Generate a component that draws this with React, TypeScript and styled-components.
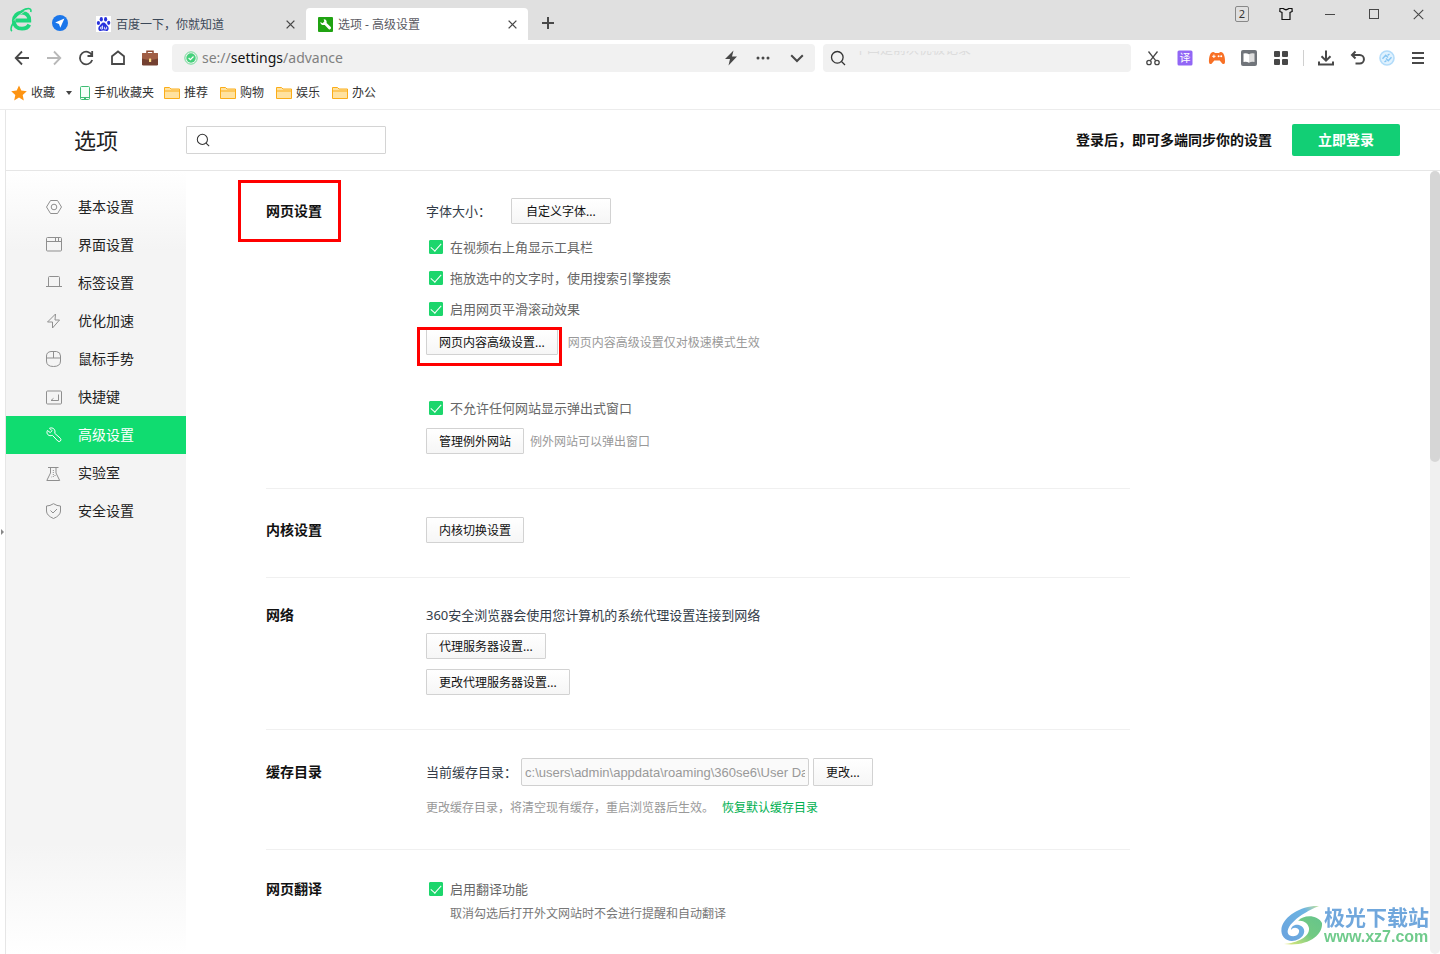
import React from "react";
import styled, { createGlobalStyle } from "styled-components";

const GlobalStyle = createGlobalStyle`
  * { box-sizing: border-box; }
  body {
    margin: 0;
    background: #fff;
    color: #333;
    font: 13px/20px "Noto Sans", "Noto Sans CJK SC", sans-serif;
  }
  button, input { font-family: inherit; margin: 0; }
  a { color: inherit; text-decoration: none; }
  svg { display: block; flex: none; }
`;

/* ---------- window frame ---------- */

const Page = styled.div`
  min-height: 100vh;
  display: flex;
  flex-direction: column;
`;

const TitleBar = styled.header`
  height: 40px;
  display: flex;
  align-items: flex-end;
  background: #e0e0e0;
  padding-left: 10px;
`;

const LogoCell = styled.div`
  height: 33px;
  width: 38px;
`;

const PinCell = styled.div`
  height: 25px;
  width: 38px;
  padding-left: 4px;
`;

const Tab = styled.div<{ $active?: boolean }>`
  display: flex;
  align-items: center;
  gap: 5px;
  width: ${(p) => (p.$active ? 222 : 220)}px;
  height: 32px;
  padding: 0 10px 0 ${(p) => (p.$active ? 12 : 10)}px;
  border-radius: 4px 4px 0 0;
  background: ${(p) => (p.$active ? "#fff" : "transparent")};
  color: ${(p) => (p.$active ? "#5a5a62" : "#3c4858")};
  font-size: 12px;
`;

const TabTitle = styled.span`
  flex: 1;
  padding-top: 2px;
  white-space: nowrap;
`;

const IconButton = styled.button<{ $w?: number; $h?: number }>`
  display: flex;
  align-items: center;
  justify-content: center;
  width: ${(p) => p.$w ?? 32}px;
  height: ${(p) => p.$h ?? 28}px;
  padding: 0;
  border: 0;
  background: none;
  color: #484848;
  flex: none;
`;

const WindowControls = styled.div`
  display: flex;
  align-self: flex-start;
  margin-left: auto;
`;

const TabCount = styled.span`
  width: 14px;
  height: 16px;
  border: 1px solid #888;
  border-radius: 2px;
  font-size: 11px;
  line-height: 14px;
  color: #333;
`;

const ToolBar = styled.div`
  height: 36px;
  display: flex;
  align-items: center;
  padding: 0 4px 0 6px;
`;

const AddressBar = styled.div`
  flex: 631 1 0;
  height: 28px;
  margin-left: 6px;
  padding-left: 12px;
  display: flex;
  align-items: center;
  background: #f1f1f1;
  border-radius: 4px;
`;

const Address = styled.span`
  flex: 1;
  margin-left: 4px;
  color: #808080;
  font-size: 14px;
  b { color: #111; font-weight: 400; }
`;

const SearchBar = styled.label`
  flex: 294 1 0;
  height: 28px;
  margin: 0 6px 0 8px;
  padding: 0 7px;
  display: flex;
  align-items: center;
  gap: 8px;
  background: #f1f1f1;
  border-radius: 4px;
`;

const SearchField = styled.input`
  flex: none;
  width: 0;
  padding: 0;
  border: 0;
  background: none;
  outline: none;
`;

const Ghost = styled.span`
  flex: 1;
  height: 5px;
  margin-bottom: 10px;
  overflow: hidden;
  display: flex;
  align-items: flex-end;
  color: #dcdcdc;
  font-size: 13px;
  line-height: 16px;
`;

const Separator = styled.i`
  width: 1px;
  height: 16px;
  margin: 0 6px;
  background: #d0d0d0;
`;

const Bookmarks = styled.nav`
  height: 34px;
  display: flex;
  align-items: center;
  gap: 12px;
  padding: 1px 0 0 11px;
  border-bottom: 1px solid #ececec;
  font-size: 12px;
  color: #333;
`;

const Bookmark = styled.a`
  display: flex;
  align-items: center;
  gap: 4px;
`;

const PhoneBookmark = styled(Bookmark)`
  margin: 0 -2px 0 -4px;
`;

const Caret = styled.i`
  margin-left: 7px;
  border: 3px solid transparent;
  border-top: 4px solid #444;
  border-bottom: 0;
`;

/* ---------- settings page ---------- */

const Body = styled.div`
  flex: 1;
  display: flex;
`;

const Edge = styled.div`
  width: 6px;
  display: flex;
  align-items: center;
  border-right: 1px solid #e6e6e6;
`;

const EdgeArrow = styled.i`
  margin-left: 1px;
  border: 3px solid transparent;
  border-left-color: #888;
  border-right: 0;
`;

const Settings = styled.div`
  flex: 1;
  min-width: 0;
  display: flex;
  flex-direction: column;
`;

const SettingsHeader = styled.div`
  height: 61px;
  display: flex;
  align-items: center;
  padding-right: 40px;
  border-bottom: 1px solid #e6e6e6;
`;

const Title = styled.h1`
  width: 180px;
  margin: 0;
  text-align: center;
  font-size: 22px;
  line-height: 28px;
  font-weight: 400;
  color: #222;
`;

const SettingsSearch = styled.label`
  width: 200px;
  height: 28px;
  display: flex;
  align-items: center;
  padding: 0 9px;
  border: 1px solid #d4d4d4;
  border-radius: 1px;
  input {
    flex: 1;
    min-width: 0;
    border: 0;
    outline: none;
    background: none;
  }
`;

const SyncNote = styled.strong`
  margin-left: auto;
  font-size: 14px;
  color: #111;
`;

const LoginButton = styled.button`
  width: 108px;
  height: 32px;
  margin-left: 20px;
  padding: 0 0 2px;
  border: 0;
  border-radius: 2px;
  background: #12cf75;
  color: #fff;
  font-size: 14px;
  font-weight: 700;
`;

const Columns = styled.div`
  flex: 1;
  display: flex;
`;

const Sidebar = styled.nav`
  width: 180px;
  padding-top: 17px;
  background: linear-gradient(#fff 0, #f4f4f4 80px, #f4f4f4 calc(100% - 110px), #fff 100%);
`;

const SideItem = styled.a<{ $active?: boolean }>`
  display: flex;
  align-items: center;
  gap: 16px;
  height: 38px;
  padding-left: 40px;
  font-size: 14px;
  color: ${(p) => (p.$active ? "#fff" : "#222")};
  background: ${(p) => (p.$active ? "#10dc70" : "transparent")};
  svg { color: ${(p) => (p.$active ? "#fff" : "#8f8f8f")}; }
`;

const Main = styled.main`
  flex: 1;
  padding-left: 80px;
`;

const SectionBox = styled.section`
  max-width: 864px;
  display: grid;
  grid-template-columns: 160px 1fr;
  padding: 28px 0 34px;
  border-bottom: 1px solid #f0f0f0;
  &:first-child { padding-top: 27px; }
  &:last-child { border-bottom: 0; padding-bottom: 0; }
`;

const SectionTitle = styled.h2<{ $h: number }>`
  position: relative;
  place-self: start;
  margin: 0;
  font-size: 14px;
  line-height: ${(p) => p.$h}px;
  font-weight: 700;
  color: #111;
`;

const TitleMark = styled.i`
  position: absolute;
  inset: -18px -19px -18px -28px;
  border: 3px solid #f00;
`;

const Row = styled.div<{ $h: number; $mt?: number; $gap?: number }>`
  display: flex;
  align-items: center;
  gap: ${(p) => p.$gap ?? 0}px;
  height: ${(p) => p.$h}px;
  margin-top: ${(p) => p.$mt ?? 0}px;
  white-space: nowrap;
`;

const Button = styled.button<{ $wide?: boolean; $tall?: boolean }>`
  height: ${(p) => (p.$tall ? 28 : 26)}px;
  padding: 2px ${(p) => (p.$wide ? 14 : 12)}px 0;
  border: 1px solid #d2d2d2;
  border-radius: 1px;
  background: linear-gradient(#fff, #f6f6f6);
  color: #111;
  font-size: 12px;
  line-height: 20px;
`;

const Marked = styled.div`
  position: relative;
  display: flex;
`;

const ButtonMark = styled.i`
  position: absolute;
  inset: -2px -4px -11px -9px;
  border: 3px solid #f00;
`;

const Hint = styled.span`
  padding-top: 2px;
  font-size: 12px;
  color: #999;
`;

const SubHint = styled(Hint)`
  margin-left: 24px;
  color: #777;
`;

const ResetLink = styled.a`
  padding-top: 2px;
  font-size: 12px;
  color: #00b050;
`;

const Field = styled.label`
  color: #333c48;
`;

const PathInput = styled.input`
  width: 288px;
  height: 28px;
  padding: 0 3px;
  border: 1px solid #d0d0d0;
  border-radius: 2px;
  background: #fafafa;
  color: #999;
  font: 13px/20px "Liberation Sans", sans-serif;
`;

const CheckLabel = styled.label`
  display: flex;
  align-items: center;
  gap: 7px;
  padding-left: 3px;
  color: #666;
`;

const Checkbox = styled.input.attrs({ type: "checkbox" })`
  appearance: none;
  width: 14px;
  height: 14px;
  display: flex;
  justify-content: center;
  border-radius: 1px;
  border: 1px solid #c8c8c8;
  &:checked {
    border-color: #1cd66c;
    background: #1cd66c;
  }
  &:checked::after {
    content: "";
    width: 5px;
    height: 9px;
    border: solid #fff;
    border-width: 0 1px 1px 0;
    transform: rotate(42deg);
  }
`;

const ScrollTrack = styled.div`
  width: 10px;
  background: #f0f0f0;
  border-radius: 5px;
`;

const ScrollThumb = styled.div`
  height: 291px;
  border-radius: 5px;
  background: #d6d6d6;
`;

const Watermark = styled.div`
  position: fixed;
  right: 11px;
  bottom: 7px;
  display: flex;
  align-items: center;
`;

const WatermarkText = styled.div`
  display: flex;
  flex-direction: column;
  font: 700 21px/22px "Noto Sans CJK SC", sans-serif;
  color: #70a7dc;
  span {
    font: 700 16px/20px "Liberation Sans", sans-serif;
    color: #70cb8c;
  }
`;

/* ---------- icons ---------- */

type IconProps = { s?: number; w?: number; children: React.ReactNode; box?: number; fill?: string };
const Svg = ({ s = 16, w = 1, box = 16, fill = "none", children }: IconProps) => (
  <svg width={s} height={s} viewBox={`0 0 ${box} ${box}`} fill={fill} stroke="currentColor" strokeWidth={w} aria-hidden>
    {children}
  </svg>
);

const BrowserLogo = () => (
  <svg width="24" height="26" viewBox="0 0 24 26" fill="none" aria-hidden>
    <path d="M6 13.5H19.3C19.4 8.8 16.5 5.7 12 5.7C7 5.7 3.8 9.3 3.8 13.8C3.8 18.6 7.2 21.7 12 21.7C15.4 21.7 18 20.3 19.3 17.6" stroke="#1fd67c" strokeWidth="3.8" />
    <path d="M5 10.4C8 5.5 15 1 19.5 1.7C21.4 2.2 21 4 20.7 5" stroke="#1fd67c" strokeWidth="1.6" />
    <path d="M3.6 15C.8 19.8.5 23 2 24" stroke="#1fd67c" strokeWidth="1.6" />
    <path d="M4 13.6C8 8.6 13 4.6 18.5 2.8" stroke="#e0e0e0" strokeWidth=".8" />
  </svg>
);

const Plane = () => (
  <svg width="16" height="16" viewBox="0 0 16 16" aria-hidden>
    <circle cx="8" cy="8" r="8" fill="#1b76ea" />
    <path d="M12.4 3.6L3.2 7.6L7 9L8.3 12.8Z" fill="#fff" />
  </svg>
);

const Paw = () => (
  <svg width="15" height="16" viewBox="0 0 15 16" aria-hidden>
    <rect width="15" height="16" fill="#fff" />
    <g fill="#2932dc">
      <ellipse cx="2.4" cy="7" rx="1.6" ry="2.1" />
      <ellipse cx="5.3" cy="3.3" rx="1.6" ry="2.2" />
      <ellipse cx="9.6" cy="3.3" rx="1.6" ry="2.2" />
      <ellipse cx="12.7" cy="6.8" rx="1.6" ry="2.1" />
      <path d="M7.5 6.5C9.5 6.5 10 8.6 11.6 9.9C13.3 11.3 13.1 15 10.4 15C9 15 8.5 14.6 7.5 14.6S6 15 4.6 15C1.9 15 1.7 11.3 3.4 9.9C5 8.6 5.5 6.5 7.5 6.5Z" />
    </g>
    <path d="M6.5 9.5V13H4.8Q4 12.2 4.8 11H6.5M8.4 10.8V13H10.6V10.8" stroke="#fff" fill="none" strokeWidth=".8" />
  </svg>
);

const WrenchBadge = () => (
  <svg width="15" height="15" viewBox="0 0 15 15" aria-hidden>
    <rect width="15" height="15" rx="1" fill="#20a312" />
    <path d="M5.7 2.2C8 2.1 9.2 4 8.6 6L12.8 10.1Q13.4 11.2 12.6 12.1Q11.7 12.8 10.8 12.2L6.7 7.9C4.4 8.6 2.3 7.2 2.3 4.9L4.6 6.3L6.3 4.6Z" fill="#fff" />
  </svg>
);

const Cross = ({ s = 9, w = 1.5 }: { s?: number; w?: number }) => (
  <Svg s={s} box={10} w={w}><path d="M.7.7L9.3 9.3M9.3.7L.7 9.3" /></Svg>
);

const Briefcase = () => (
  <svg width="18" height="16" viewBox="0 0 18 16" aria-hidden>
    <path d="M6 3V1.2H12V3" fill="none" stroke="#8d4a32" strokeWidth="1.5" />
    <rect x="1" y="3" width="16" height="12.5" rx="1.3" fill="#744031" />
    <path d="M1 4.2Q1 3 2.2 3H15.8Q17 3 17 4.2V8.5Q9 11 1 8.5Z" fill="#a05e45" />
    <rect x="8" y="8.5" width="2.2" height="3.6" rx=".5" fill="#ffe08a" />
  </svg>
);

const SafeBadge = () => (
  <svg width="14" height="14" viewBox="0 0 14 14" fill="none" aria-hidden>
    <circle cx="7" cy="7" r="6.2" stroke="#6edc96" />
    <circle cx="7" cy="7" r="4.7" fill="#45d17b" />
    <path d="M4.6 7L6.4 8.7L9.5 5.5" stroke="#fff" strokeWidth="1.2" />
  </svg>
);

const Lens = ({ s = 16, w = 1.3 }: { s?: number; w?: number }) => (
  <Svg s={s} w={w}><circle cx="7.3" cy="7.3" r="5.8" /><path d="M11.5 11.5L15 15" /></Svg>
);

const Translate = () => (
  <svg width="16" height="16" viewBox="0 0 16 16" aria-hidden>
    <rect x=".5" y=".5" width="15" height="15" rx="1.5" fill="#9166f5" />
    <text x="8" y="12.2" textAnchor="middle" fontSize="11" fill="#fff" fontFamily="Noto Sans CJK SC">译</text>
  </svg>
);

const Gamepad = () => (
  <svg width="18" height="16" viewBox="0 0 18 16" aria-hidden>
    <path d="M4.2 2.2Q6 1.7 7 2.9H11Q12 1.7 13.8 2.2C16.2 3 17.2 8 17 12.2Q16.5 15 14.4 13.7L11.7 10.6H6.3L3.6 13.7Q1.5 15 1 12.2C.8 8 1.8 3 4.2 2.2Z" fill="#f87025" />
    <path d="M5.9 4.6V8M4.2 6.3H7.6" stroke="#fff" />
    <circle cx="10.6" cy="6.3" r="1" fill="#fff" /><circle cx="13.2" cy="6.3" r="1" fill="#fff" />
  </svg>
);

const Reader = () => (
  <svg width="16" height="16" viewBox="0 0 16 16" aria-hidden>
    <rect width="16" height="16" rx="2" fill="#70747a" />
    <path d="M2.5 3.5Q5.5 2.6 8 4.3V12.7Q5.5 11.2 2.5 12Z" fill="#fff" />
    <path d="M13.5 3.5Q10.5 2.6 8 4.3V12.7Q10.5 11.2 13.5 12Z" fill="#dedede" />
  </svg>
);

const Sphere = () => (
  <svg width="16" height="16" viewBox="0 0 16 16" fill="none" aria-hidden>
    <circle cx="8" cy="8" r="7" fill="#e0f2fe" stroke="#b3dcfa" strokeWidth="1.6" />
    <path d="M3.5 8.7L6.7 5.3L9 7.6M12.5 7.3L9.3 10.7L7 8.4M8.6 5.3L10.5 4M7.4 10.7L5.5 12" stroke="#86c5f3" strokeWidth="1.4" />
  </svg>
);

const Folder = () => (
  <svg width="16" height="14" viewBox="0 0 16 14" aria-hidden>
    <path d="M.5 12.5V1.5H5.5L7 3H15.5V12.5Z" fill="#ffe2a0" stroke="#fbad18" />
    <path d="M1 5H15" stroke="#fbad18" />
  </svg>
);

const Phone = () => (
  <svg width="10" height="14" viewBox="0 0 10 14" aria-hidden>
    <rect x=".5" y=".5" width="9" height="13" rx="1" fill="#f4fff8" stroke="#3fbd74" />
    <path d="M.5 11.5H9.5M4 12.5H6" stroke="#3fbd74" />
  </svg>
);

const Star = () => (
  <svg width="16" height="16" viewBox="0 0 16 16" aria-hidden>
    <path d="M8 .5L10.3 5.6L15.8 6.2L11.7 9.9L12.8 15.4L8 12.6L3.2 15.4L4.3 9.9L.2 6.2L5.7 5.6Z" fill="#fd9413" />
  </svg>
);

const Swirl = () => (
  <svg width="44" height="42" viewBox="0 0 44 42" fill="none" aria-hidden>
    <defs>
      <linearGradient id="swirlBlue" x1="1" y1="0" x2="0" y2="1">
        <stop stopColor="#c4e39b" /><stop offset=".25" stopColor="#6db4e2" /><stop offset="1" stopColor="#6aa2de" />
      </linearGradient>
      <linearGradient id="swirlGreen" x1="1" y1="0" x2="0" y2="1">
        <stop stopColor="#66c48c" /><stop offset=".5" stopColor="#72ca82" /><stop offset="1" stopColor="#e8ea7c" />
      </linearGradient>
    </defs>
    <path d="M39 1C22 0 4 11 1.5 23C0 34 10 39 19 34C26 30 26 22 19 20C14 19 11 22 11 25C13 22 17 22 19 25C20 30 14 33 9 30C3 23 19 9 39 1Z" fill="url(#swirlBlue)" />
    <path d="M18 16C24 9 38 10 42 18C43 30 28 42 4 39C17 38 30 32 29 23C28 18 23 15 18 16Z" fill="url(#swirlGreen)" />
  </svg>
);

const sideIcons: Record<string, React.ReactNode> = {
  基本设置: <><path d="M4.5 1.5H11.5L15.5 8L11.5 14.5H4.5L.5 8Z" /><circle cx="8" cy="8" r="2.8" /></>,
  界面设置: <><rect x=".5" y=".5" width="15" height="13.5" rx="1" /><path d="M.5 4.5H15.5M9.5 .5V4M12.5 .5V4" /></>,
  标签设置: <path d="M2.5 11.5V2.5Q2.5 1.5 3.5 1.5H12.5Q13.5 1.5 13.5 2.5V11.5M0 11.5H16" />,
  优化加速: <path d="M9.5 1L1.5 9H6.5V15L13.5 7H9Z" />,
  鼠标手势: <path d="M5 .5H10.5Q14.5 1 14.5 5V10Q14.5 15.5 7.5 15.5T.5 10V5Q.5 1 5 .5ZM.5 7H14.5M7.5 .5V7" />,
  快捷键: <><rect x=".5" y="2" width="15" height="13" rx="1" /><path d="M12.5 5.5V11.5H5L7.5 9.3" /></>,
  高级设置: <path d="M3.5 1.2L6 3.7L4.3 5.6L1.4 3.5C-.3 7 3 9.8 6.4 8.3L11.8 14Q13.2 15.2 14.4 14T14.3 11.2L8.7 6.3C10 2.8 7 -.1 3.5 1.2Z" />,
  实验室: <><path d="M2 2.5H12.5M4.5 2.5V8L.8 15.5H13.7L10 8V2.5" /><path d="M7.3 5V13M5.5 12H6M9 10V11" strokeDasharray="1 1" /></>,
  安全设置: <path d="M7.5 .7Q11 3 14.5 3V8Q14.5 12.5 7.5 15.5Q.5 12.5 .5 8V3Q4 3 7.5 .7ZM4.5 7.5L7 10L11 6" />,
};

/* ---------- pieces ---------- */

const Check = ({ children }: { children: React.ReactNode }) => (
  <CheckLabel><Checkbox defaultChecked />{children}</CheckLabel>
);

const Section = ({ title, h, marked, children }: { title: string; h: number; marked?: boolean; children: React.ReactNode }) => (
  <SectionBox>
    <SectionTitle $h={h}>{title}{marked && <TitleMark />}</SectionTitle>
    <div>{children}</div>
  </SectionBox>
);

export default function App() {
  return (
    <Page>
      <GlobalStyle />
      <TitleBar>
        <LogoCell><BrowserLogo /></LogoCell>
        <PinCell><Plane /></PinCell>
        <Tab>
          <Paw />
          <TabTitle>百度一下，你就知道</TabTitle>
          <IconButton $w={12} aria-label="关闭标签"><Cross /></IconButton>
        </Tab>
        <Tab $active>
          <WrenchBadge />
          <TabTitle>选项 - 高级设置</TabTitle>
          <IconButton $w={12} aria-label="关闭标签"><Cross /></IconButton>
        </Tab>
        <IconButton $w={40} $h={34} aria-label="新建标签">
          <Svg s={12} box={12} w={2}><path d="M6 0V12M0 6H12" /></Svg>
        </IconButton>
        <WindowControls>
          <IconButton $w={44} aria-label="标签数"><TabCount>2</TabCount></IconButton>
          <IconButton $w={44} aria-label="皮肤">
            <Svg s={14} box={14} w={1.2}><path stroke="#111" d="M4.2 1.5H1L.8 4.5L3 5.5V12.5H11V5.5L13.2 4.5L13 1.5H9.8Q7 4 4.2 1.5Z" /></Svg>
          </IconButton>
          <IconButton $w={44} aria-label="最小化"><Svg s={10} box={10}><path d="M0 5.5H10" /></Svg></IconButton>
          <IconButton $w={44} aria-label="最大化"><Svg s={10} box={10}><rect x=".5" y=".5" width="9" height="9" /></Svg></IconButton>
          <IconButton $w={44} aria-label="关闭"><Cross s={11} w={1} /></IconButton>
        </WindowControls>
      </TitleBar>

      <ToolBar>
        <IconButton aria-label="后退"><Svg w={1.8}><path d="M15 8H2M8 1.5L1.7 8L8 14.5" /></Svg></IconButton>
        <IconButton aria-label="前进"><Svg w={1.8}><g stroke="#b8b8b8"><path d="M1 8H14M8 1.5L14.3 8L8 14.5" /></g></Svg></IconButton>
        <IconButton aria-label="刷新"><Svg w={1.8}><path d="M14 5.5A6.3 6.3 0 1 0 14.2 10M14.2 1V6H9.5" /></Svg></IconButton>
        <IconButton aria-label="主页"><Svg w={1.8}><path d="M2 14V6.3L8 1.5L14 6.3V14Z" /></Svg></IconButton>
        <IconButton aria-label="工具箱"><Briefcase /></IconButton>
        <AddressBar>
          <SafeBadge />
          <Address>se://<b>settings</b>/advance</Address>
          <IconButton aria-label="极速模式">
            <Svg s={16} fill="currentColor" w={0}><path d="M10.5.5L2 9H7L5.5 15.5L14 6.5H9Z" /></Svg>
          </IconButton>
          <IconButton aria-label="更多">
            <Svg fill="currentColor" w={0}><circle cx="3" cy="8" r="1.5" /><circle cx="8" cy="8" r="1.5" /><circle cx="13" cy="8" r="1.5" /></Svg>
          </IconButton>
          <IconButton $w={36} aria-label="展开"><Svg w={2}><path d="M2.2 5.2L8 11L13.8 5.2" /></Svg></IconButton>
        </AddressBar>
        <SearchBar>
          <Lens />
          <Ghost>十四是前次优极记录</Ghost>
          <SearchField aria-label="搜索" />
        </SearchBar>
        <IconButton aria-label="截图">
          <Svg w={1.3}><circle cx="4" cy="12.5" r="2.2" /><circle cx="12" cy="12.5" r="2.2" /><path d="M3.5 1.5L10.7 10.7M12.5 1.5L5.3 10.7" /></Svg>
        </IconButton>
        <IconButton aria-label="翻译"><Translate /></IconButton>
        <IconButton aria-label="游戏"><Gamepad /></IconButton>
        <IconButton aria-label="阅读"><Reader /></IconButton>
        <IconButton aria-label="应用">
          <Svg fill="currentColor" w={0}>
            <rect x="1" y="1" width="6" height="6" rx="1" /><rect x="9" y="1" width="6" height="6" rx="1" />
            <rect x="1" y="9" width="6" height="6" rx="1" /><rect x="9" y="9" width="6" height="6" rx="1" />
          </Svg>
        </IconButton>
        <Separator />
        <IconButton aria-label="下载"><Svg s={18} box={18} w={2}><path d="M9 1.5V11.5M4.5 7.2L9 11.7L13.5 7.2M2 12.5V15.5H16V12.5" /></Svg></IconButton>
        <IconButton aria-label="撤销"><Svg w={2}><path d="M5.5 1.5L2 5L5.5 8.5M2 5H9.7A4.2 4.2 0 0 1 9.7 13.5H5.5" /></Svg></IconButton>
        <IconButton $w={26} aria-label="账户"><Sphere /></IconButton>
        <IconButton $w={36} aria-label="菜单"><Svg s={14} box={14} w={2}><path d="M1 2H13M1 7H13M1 12H13" /></Svg></IconButton>
      </ToolBar>

      <Bookmarks>
        <Bookmark href="#fav"><Star />收藏 <Caret /></Bookmark>
        <PhoneBookmark href="#phone"><Phone />手机收藏夹</PhoneBookmark>
        {["推荐", "购物", "娱乐", "办公"].map((t) => (
          <Bookmark key={t} href="#folder"><Folder />{t}</Bookmark>
        ))}
      </Bookmarks>

      <Body>
        <Edge><EdgeArrow /></Edge>
        <Settings>
          <SettingsHeader>
            <Title>选项</Title>
            <SettingsSearch><Lens s={14} w={1.2} /><input type="search" aria-label="搜索设置" /></SettingsSearch>
            <SyncNote>登录后，即可多端同步你的设置</SyncNote>
            <LoginButton>立即登录</LoginButton>
          </SettingsHeader>
          <Columns>
            <Sidebar>
              {Object.entries(sideIcons).map(([name, icon]) => (
                <SideItem key={name} href="#section" $active={name === "高级设置"}>
                  <Svg>{icon}</Svg>{name}
                </SideItem>
              ))}
            </Sidebar>
            <Main>
              <Section title="网页设置" h={26} marked>
                <Row $h={26} $gap={20}><Field as="span">字体大小：</Field><Button $wide>自定义字体...</Button></Row>
                <Row $h={31} $mt={7}><Check>在视频右上角显示工具栏</Check></Row>
                <Row $h={31}><Check>拖放选中的文字时，使用搜索引擎搜索</Check></Row>
                <Row $h={31}><Check>启用网页平滑滚动效果</Check></Row>
                <Row $h={26} $mt={5} $gap={10}>
                  <Marked><Button>网页内容高级设置...</Button><ButtonMark /></Marked>
                  <Hint>网页内容高级设置仅对极速模式生效</Hint>
                </Row>
                <Row $h={31} $mt={37}><Check>不允许任何网站显示弹出式窗口</Check></Row>
                <Row $h={26} $mt={5} $gap={6}><Button>管理例外网站</Button><Hint>例外网站可以弹出窗口</Hint></Row>
              </Section>
              <Section title="内核设置" h={26}>
                <Row $h={26}><Button>内核切换设置</Button></Row>
              </Section>
              <Section title="网络" h={18}>
                <Row $h={18}><Field as="span">360安全浏览器会使用您计算机的系统代理设置连接到网络</Field></Row>
                <Row $h={26} $mt={9}><Button>代理服务器设置...</Button></Row>
                <Row $h={26} $mt={10}><Button>更改代理服务器设置...</Button></Row>
              </Section>
              <Section title="缓存目录" h={28}>
                <Row $h={28} $gap={4}>
                  <Field htmlFor="cache">当前缓存目录：</Field>
                  <PathInput id="cache" readOnly value="c:\users\admin\appdata\roaming\360se6\User Data" />
                  <Button $tall>更改...</Button>
                </Row>
                <Row $h={16} $mt={13} $gap={8}>
                  <Hint>更改缓存目录，将清空现有缓存，重启浏览器后生效。</Hint>
                  <ResetLink href="#reset">恢复默认缓存目录</ResetLink>
                </Row>
              </Section>
              <Section title="网页翻译" h={22}>
                <Row $h={22}><Check>启用翻译功能</Check></Row>
                <Row $h={18} $mt={4}><SubHint>取消勾选后打开外文网站时不会进行提醒和自动翻译</SubHint></Row>
              </Section>
            </Main>
            <ScrollTrack><ScrollThumb /></ScrollTrack>
          </Columns>
        </Settings>
      </Body>

      <Watermark>
        <Swirl />
        <WatermarkText>极光下载站<span>www.xz7.com</span></WatermarkText>
      </Watermark>
    </Page>
  );
}
